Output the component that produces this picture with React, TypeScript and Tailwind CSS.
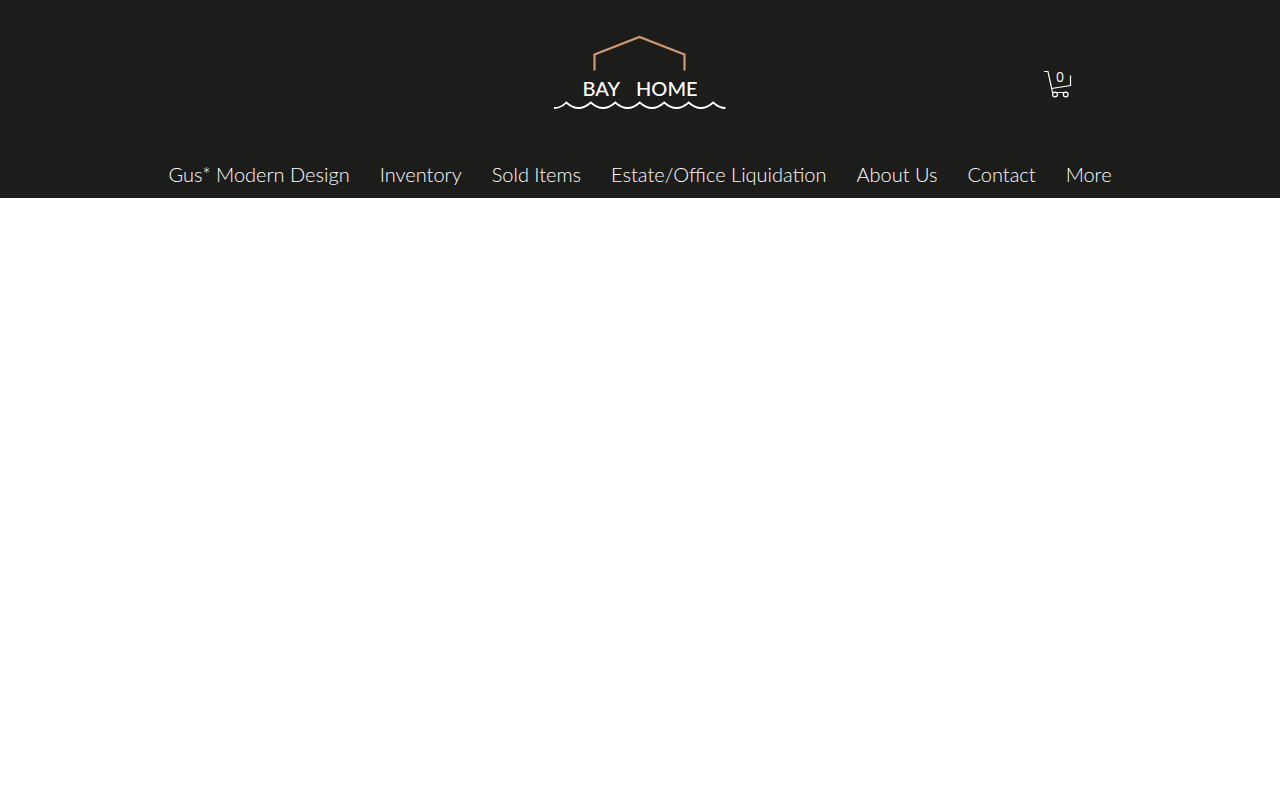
const NAV_ITEMS = [
    { label: "Gus* Modern Design", href: "#gus-modern-design" },
    { label: "Inventory", href: "#inventory" },
    { label: "Sold Items", href: "#sold-items" },
    { label: "Estate/Office Liquidation", href: "#liquidation" },
    { label: "About Us", href: "#about" },
    { label: "Contact", href: "#contact" },
];

function Logo() {
    return (
        <a href="#home" aria-label="Bay Home" className="flex flex-col items-center text-white">
            <svg width="94" height="36" viewBox="0 0 94 36" fill="none" stroke="#cf9a70" strokeWidth="2.2" aria-hidden="true">
                <path d="M1.5 35.5V19.5L46.5 2L91.5 19.5V35.5" />
            </svg>
            <span className="mt-2 flex gap-4 text-[20px] leading-[18px] font-medium font-['Lato',sans-serif]">
                <span>BAY</span>
                <span>HOME</span>
            </span>
            <svg className="mt-1" width="172" height="10" viewBox="0 0 172 10" fill="none" stroke="#fff" strokeWidth="1.8" aria-hidden="true">
                <path d="M0 7Q7 7 12.3 1.5Q24.5 12.5 36.8 1.5Q49 12.5 61.3 1.5Q73.5 12.5 85.8 1.5Q98 12.5 110.2 1.5Q122.5 12.5 134.7 1.5Q147 12.5 159.2 1.5Q165 7 171.5 7" />
            </svg>
        </a>
    );
}

function CartButton() {
    return (
        <button type="button" aria-label="Cart with 0 items" className="relative text-white cursor-pointer">
            <svg width="28" height="28" viewBox="0 0 28 28" fill="none" stroke="currentColor" strokeWidth="1.2" aria-hidden="true">
                <path d="M0 1.5H4L8 20" />
                <path d="M7.5 18.5L26.5 15.5V5.5" />
                <path d="M8 20L8.5 22.5H24" />
                <circle cx="11" cy="24.5" r="2.4" />
                <circle cx="21.7" cy="24.5" r="2.4" />
            </svg>
            <span className="absolute inset-x-0 top-0 pl-1 text-center text-sm leading-[14px] font-['Open_Sans',sans-serif]">0</span>
        </button>
    );
}

export default function App() {
    return (
        <div className="min-h-screen bg-white">
            <header className="bg-[#1c1c1a] pt-[35px] pb-1">
                <div className="mx-auto grid max-w-[980px] grid-cols-[1fr_auto_1fr] items-start">
                    <div />
                    <Logo />
                    <div className="flex justify-end pt-[35px] pr-[58px]">
                        <CartButton />
                    </div>
                </div>
                <nav aria-label="Site" className="mt-[43px] flex flex-wrap justify-center gap-x-[30px] text-[20px] leading-10 font-light text-white font-['Lato',sans-serif]">
                    {NAV_ITEMS.map((item) => (
                        <a key={item.label} href={item.href} className="whitespace-nowrap">
                            {item.label}
                        </a>
                    ))}
                    <button type="button" className="cursor-pointer">More</button>
                </nav>
            </header>
            <main />
        </div>
    );
}
